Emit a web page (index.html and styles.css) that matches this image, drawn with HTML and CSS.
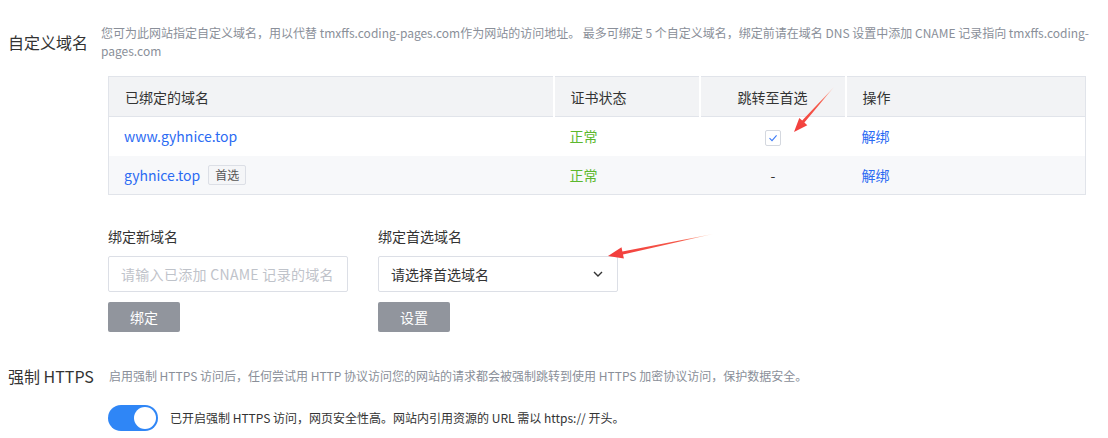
FILE: index.html
```html
<!DOCTYPE html>
<html lang="zh-CN">
<head>
<meta charset="utf-8">
<title>自定义域名</title>
<link rel="stylesheet" href="styles.css">
</head>
<body>
<div class="page">
  <section class="sec sec-domain">
    <div class="sec-head">
      <h2 class="sec-title">自定义域名</h2>
      <p class="sec-desc">您可为此网站指定自定义域名，用以代替 tmxffs.coding-pages.com作为网站的访问地址。 最多可绑定 5 个自定义域名，绑定前请在域名 DNS 设置中添加 CNAME 记录指向 tmxffs.coding-pages.com</p>
    </div>
    <div class="sec-body">
      <table class="dtable">
        <colgroup>
          <col class="c1"><col class="c2"><col class="c3"><col class="c4">
        </colgroup>
        <thead>
          <tr><th>已绑定的域名</th><th>证书状态</th><th class="center">跳转至首选</th><th>操作</th></tr>
        </thead>
        <tbody>
          <tr>
            <td><a class="link">www.gyhnice.top</a></td>
            <td class="ok">正常</td>
            <td class="center"><span class="checkbox"><svg width="14" height="14" viewBox="0 0 14 14"><path d="M3.5 7.2 L6 9.6 L10.6 4.4" fill="none" stroke="#3d7bf7" stroke-width="1.1"/></svg></span></td>
            <td><a class="link">解绑</a></td>
          </tr>
          <tr class="alt">
            <td><a class="link">gyhnice.top</a><span class="tag">首选</span></td>
            <td class="ok">正常</td>
            <td class="center">-</td>
            <td><a class="link">解绑</a></td>
          </tr>
        </tbody>
      </table>
      <div class="forms">
        <div class="field">
          <label class="field-label">绑定新域名</label>
          <input class="input" type="text" placeholder="请输入已添加 CNAME 记录的域名">
          <button class="btn">绑定</button>
        </div>
        <div class="field">
          <label class="field-label">绑定首选域名</label>
          <div class="select"><span>请选择首选域名</span><svg width="10" height="6" viewBox="0 0 10 6"><path d="M1 1 L5 5 L9 1" fill="none" stroke="#333" stroke-width="1.4"/></svg></div>
          <button class="btn">设置</button>
        </div>
      </div>
    </div>
  </section>
  <section class="sec sec-https">
    <div class="sec-head">
      <h2 class="sec-title">强制 HTTPS</h2>
      <p class="sec-desc">启用强制 HTTPS 访问后，任何尝试用 HTTP 协议访问您的网站的请求都会被强制跳转到使用 HTTPS 加密协议访问，保护数据安全。</p>
    </div>
    <div class="sec-body toggle-row">
      <span class="switch"><span class="knob"></span></span>
      <span class="switch-text">已开启强制 HTTPS 访问，网页安全性高。网站内引用资源的 URL 需以 https:// 开头。</span>
    </div>
  </section>
  <svg class="arrows" width="1108" height="438" viewBox="0 0 1108 438">
    <defs>
      <linearGradient id="g1" x1="834" y1="87" x2="794" y2="132" gradientUnits="userSpaceOnUse">
        <stop offset="0" stop-color="#ffd0c0"/>
        <stop offset="0.35" stop-color="#f55a4a"/>
        <stop offset="1" stop-color="#f23c3c"/>
      </linearGradient>
      <linearGradient id="g2" x1="713" y1="234" x2="608" y2="256" gradientUnits="userSpaceOnUse">
        <stop offset="0" stop-color="#ffe0c8"/>
        <stop offset="0.3" stop-color="#f55a4a"/>
        <stop offset="1" stop-color="#f23c3c"/>
      </linearGradient>
    </defs>
    <polygon fill="url(#g1)" points="834,87 804.4,122.5 807.3,125.2 794,132 799.3,117.9 802.2,120.5"/>
    <polygon fill="url(#g2)" points="713,234 623.0,254.4 623.9,258.6 608,256 621.5,247.2 622.4,251.4"/>
  </svg>
</div>
</body>
</html>
```

FILE: styles.css
```css
* { box-sizing: border-box; }
html, body { margin: 0; padding: 0; background: #fff; }
body {
  font-family: "Noto Sans CJK SC", "Noto Sans", sans-serif;
  color: #333;
  width: 1108px;
  height: 438px;
  overflow: hidden;
}
.page {
  position: relative;
  padding: 24px 14px 0 8px;
}
.sec-head {
  display: flex;
  align-items: center;
  gap: 13px;
}
.sec-title {
  margin: 0;
  font-size: 16px;
  font-weight: 400;
  line-height: 22px;
  color: #333;
  white-space: nowrap;
}
.sec-desc {
  margin: 0;
  font-size: 12px;
  line-height: 18px;
  color: #8a8f99;
}
.sec-body {
  margin-left: 100px;
}
.sec-domain .sec-body { margin-top: 16px; }

.dtable {
  width: 977px;
  border-collapse: collapse;
  table-layout: fixed;
  border: 1px solid #e1e4ea;
  font-size: 14px;
}
.c1 { width: 445px; }
.c2 { width: 146px; }
.c3 { width: 146px; }
.c4 { width: 240px; }
.dtable th {
  background: #f2f3f5;
  font-weight: 400;
  text-align: left;
  height: 40px;
  padding: 0 16px;
  border-left: 2px solid #fff;
  border-bottom: 1px solid #e1e4ea;
  color: #333;
}
.dtable th:first-child { border-left: 0; }
.dtable td {
  height: 39px;
  padding: 0 15px;
  vertical-align: middle;
}
.dtable td + td { padding-left: 16px; }
.dtable tr.alt td { background: #f7f8fa; }
.dtable .center { text-align: center; }
.link { color: #2b6bf3; text-decoration: none; }
.ok { color: #5cb82e; }
.tag {
  display: inline-block;
  margin-left: 8px;
  height: 20px;
  padding: 0 6px;
  line-height: 18px;
  font-size: 12px;
  color: #555;
  background: #f5f6f8;
  border: 1px solid #dcdfe6;
  border-radius: 2px;
  vertical-align: 1px;
}
.checkbox {
  display: inline-flex;
  width: 16px;
  height: 16px;
  border: 1px solid #d4d8df;
  border-radius: 2px;
  background: #fff;
  align-items: center;
  justify-content: center;
  vertical-align: middle;
}
.forms {
  display: flex;
  gap: 30px;
  margin-top: 31px;
}
.field {
  display: flex;
  flex-direction: column;
  align-items: flex-start;
  width: 240px;
}
.field-label {
  font-size: 14px;
  line-height: 20px;
  color: #333;
}
.input, .select {
  margin-top: 10px;
  width: 240px;
  height: 36px;
  border: 1px solid #dcdfe6;
  border-radius: 2px;
  font-family: inherit;
  font-size: 14px;
  background: #fff;
}
.input {
  padding: 0 12px;
  outline: none;
}
.input::placeholder { color: #bfc3ca; letter-spacing: 0.3px; }
.select {
  display: flex;
  align-items: center;
  justify-content: space-between;
  padding: 0 14px 0 12px;
  color: #333;
}
.btn {
  margin-top: 10px;
  width: 72px;
  height: 30px;
  border: 0;
  border-radius: 2px;
  background: #91959d;
  color: #fff;
  font-family: inherit;
  font-size: 14px;
}
.sec-https { margin-top: 33px; }
.sec-https .sec-head { gap: 15px; }
.toggle-row {
  display: flex;
  align-items: center;
  gap: 12px;
  margin-top: 18px;
}
.switch {
  display: inline-flex;
  justify-content: flex-end;
  align-items: center;
  width: 50px;
  height: 26px;
  padding: 2px;
  border-radius: 13px;
  background: #2f86f6;
}
.knob {
  width: 22px;
  height: 22px;
  border-radius: 50%;
  background: #fff;
}
.switch-text {
  font-size: 12px;
  line-height: 18px;
  color: #333;
}
.arrows {
  position: absolute;
  left: 0;
  top: 0;
  pointer-events: none;
}
```
